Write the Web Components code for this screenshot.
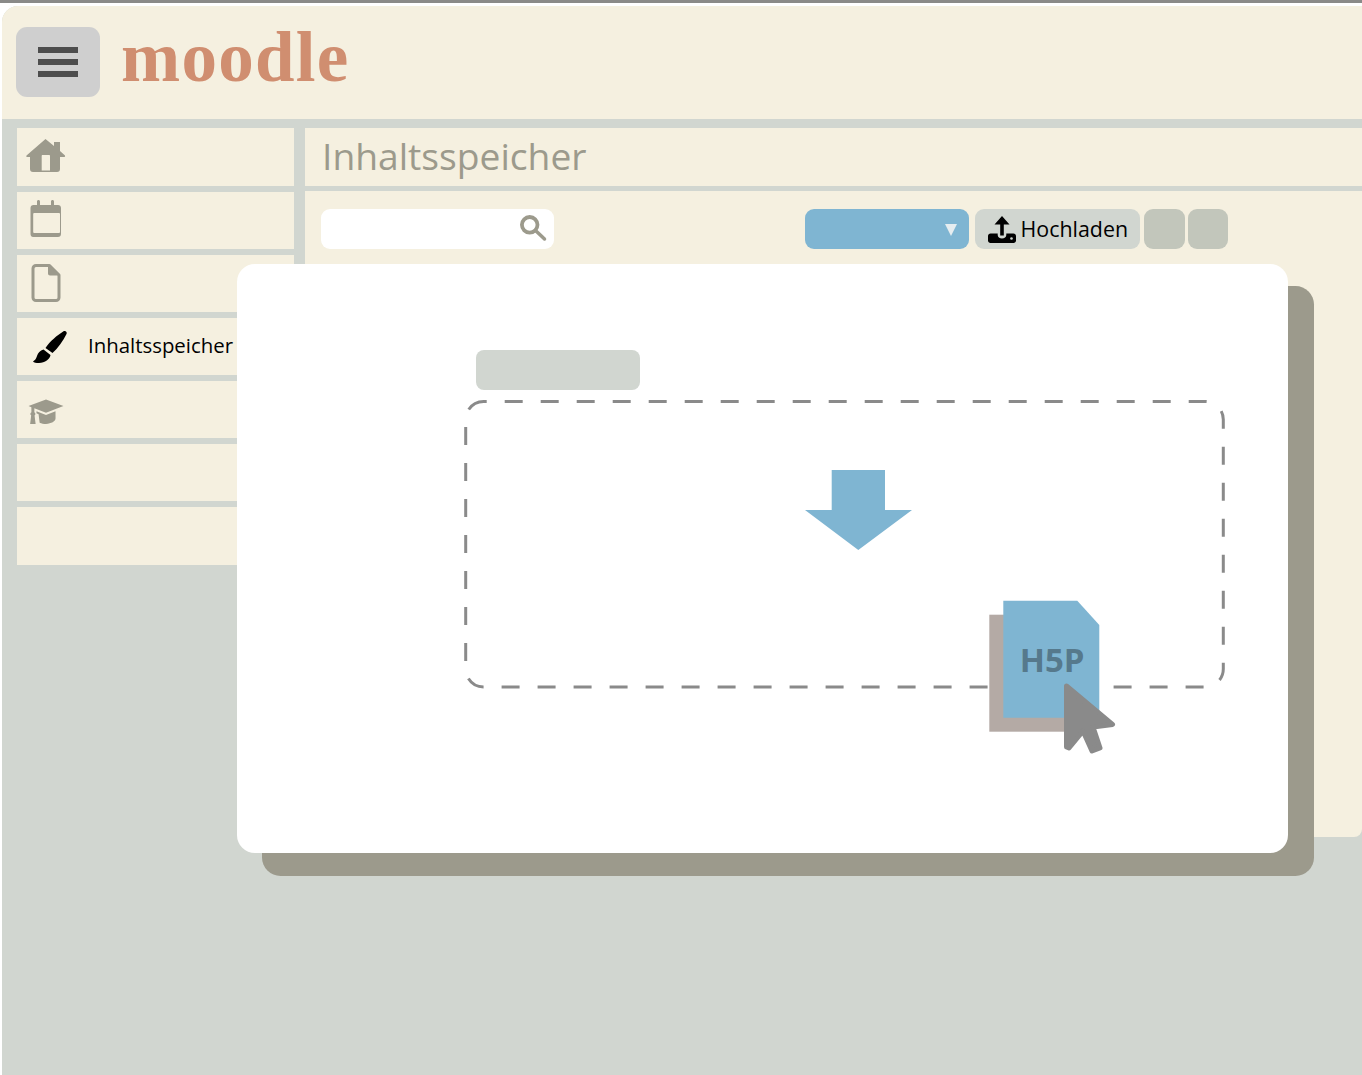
<!DOCTYPE html>
<html>
<head>
<meta charset="utf-8">
<title>Inhaltsspeicher</title>
<style>
  html, body { margin: 0; padding: 0; background: #fff; }
  body { font-family: "Open Sans", "Noto Sans", sans-serif; }
</style>
</head>
<body>
<moodle-app>
  <moodle-header slot="header"></moodle-header>
  <side-nav slot="nav">
    <nav-item icon="home"></nav-item>
    <nav-item icon="calendar"></nav-item>
    <nav-item icon="file"></nav-item>
    <nav-item icon="brush" active>Inhaltsspeicher</nav-item>
    <nav-item icon="hat"></nav-item>
    <nav-item></nav-item>
    <nav-item></nav-item>
  </side-nav>
  <content-bank slot="main"></content-bank>
  <upload-modal slot="modal"></upload-modal>
</moodle-app>

<script>
const ICONS = {
  home: `<svg width="40" height="36" viewBox="0 2 40 36"><path fill="#9c9a8c" fill-rule="evenodd" d="M19.500 2 28 9V5h6v9l5 4.500c.5 1.500-.5 1.500-1 1.500h-4v12c0 2-1 3-3 3H7c-2 0-3-1-3-3V20H1.500c-1 0-1.500-.5-1-1.500zM15.700 19v14.500H24V19c0-.6-.4-1-1-1h-6.300c-.6 0-1 .4-1 1z"/></svg>`,
  calendar: `<svg style="margin:-2px 0 0 4px" width="33" height="38" viewBox="0 0 33 38"><path fill="#9c9a8c" d="M3.500 5H7V1.500C7 .600 7.600 0 8.500 0s1.500.600 1.500 1.500V5h11V1.500c0-.900.600-1.500 1.500-1.500s1.500.600 1.500 1.500V5h4c1.800 0 3 1.200 3 3v26c0 1.800-1.200 3-3 3h-25C1.700 37 .500 35.800.500 34V8c0-1.800 1.200-3 3-3z"/><rect x="3.200" y="13" width="26.800" height="20" rx="1" fill="#f5f0e0"/></svg>`,
  file: `<svg style="margin-left:5px" width="30" height="38" viewBox="0 0 30 38"><path fill="none" stroke="#9c9a8c" stroke-width="3" stroke-linejoin="round" d="M5 1.500h13.500L28 11v22.500c0 1.700-1.300 3-3 3H5c-1.700 0-3-1.300-3-3v-29c0-1.700 1.300-3 3-3z"/><path fill="#9c9a8c" d="M17 1.500 28 11.500H19c-1.100 0-2-.9-2-2z"/></svg>`,
  brush: `<svg style="margin-top:1px" width="38" height="34" viewBox="0 0 38 34"><path fill="#000" d="M31.500 1.200c2-1 4 .800 3 2.800C31 11 26 18 20.500 23l-7-5C18 11 25 5.500 31.500 1.200zM11.500 19.500l7 5.500c-.5 4-5.500 8-11.500 8-3 0-5-.5-6-1.500C3.500 30 4 28.500 5 26c1-3 3-5.500 6.500-6.500z"/></svg>`,
  hat: `<svg style="margin:5px 0 0 1.500px" width="36" height="26.500" viewBox="0.500 0.500 34 25"><path fill="#9c9a8c" d="M17.500 1 34 7.200 17.500 13.500 6.500 9.300V13c.6.300 1 .9 1 1.600 0 .6-.3 1.100-.8 1.400l1 8H2.500l1-8c-.5-.3-.8-.8-.8-1.400 0-.7.400-1.300 1-1.600V8.300L1 7.200zM8.500 12l9 3.500 9-3.500v7c0 2.500-4 5-9 5-2.200 0-4.300-.5-6-1.200L10.500 15 8.500 14z"/></svg>`
};

class MoodleApp extends HTMLElement {
  constructor() {
    super();
    this.attachShadow({ mode: "open" }).innerHTML = `
      <style>
        :host { display: block; position: relative; width: 1362px; height: 1075px; overflow: hidden; background: #fff; }
        .topline { height: 3px; background: #8a8a88; }
        .frame {
          margin: 3px 0 0 2px;
          height: 1069px;
          background: #d1d6d0;
          border-top-left-radius: 16px;
          overflow: hidden;
          display: flex;
          flex-direction: column;
        }
        .body {
          display: grid;
          grid-template-columns: 277px 1fr;
          column-gap: 11px;
          padding: 9px 0 0 15px;
          align-items: start;
        }
      </style>
      <div class="topline"></div>
      <div class="frame">
        <slot name="header"></slot>
        <div class="body">
          <slot name="nav"></slot>
          <slot name="main"></slot>
        </div>
      </div>
      <slot name="modal"></slot>
    `;
  }
}

class MoodleHeader extends HTMLElement {
  constructor() {
    super();
    this.attachShadow({ mode: "open" }).innerHTML = `
      <style>
        :host { display: flex; align-items: center; gap: 21px; height: 113px; box-sizing: border-box; padding: 0 0 2px 14px; background: #f5f0e0; }
        .burger {
          width: 84px; height: 70px; border-radius: 11px; background: #cfcfcf;
          display: flex; flex-direction: column; justify-content: center; align-items: center; gap: 6px;
        }
        .burger i { display: block; width: 40px; height: 6px; background: #4d4d4d; }
        .logo {
          font-family: "Liberation Serif", serif; font-weight: 700; font-size: 71px; line-height: 1;
          color: #d08e70; letter-spacing: 1.300px; margin-top: -8px;
        }
      </style>
      <div class="burger"><i></i><i></i><i></i></div>
      <div class="logo">moodle</div>
    `;
  }
}

class SideNav extends HTMLElement {
  constructor() {
    super();
    this.attachShadow({ mode: "open" }).innerHTML = `
      <style>
        :host { display: flex; flex-direction: column; gap: 5.750px; margin-top: .4px; }
      </style>
      <slot></slot>
    `;
  }
}

class NavItem extends HTMLElement {
  constructor() {
    super();
    const icon = ICONS[this.getAttribute("icon")] || "";
    this.attachShadow({ mode: "open" }).innerHTML = `
      <style>
        :host { display: flex; align-items: center; height: 57.400px; background: #f5f0e0; color: #000; font-size: 20.400px; white-space: nowrap; }
        .icon { width: 71px; flex: none; display: flex; align-items: center; padding-left: 9px; box-sizing: border-box; }
        :host([active]) .icon { padding-left: 15px; }
        .label { margin-top: -4px; }
        svg { display: block; }
      </style>
      <span class="icon">${icon}</span>
      <span class="label"><slot></slot></span>
    `;
  }
}

class ContentBank extends HTMLElement {
  constructor() {
    super();
    this.attachShadow({ mode: "open" }).innerHTML = `
      <style>
        :host { display: block; }
        h1 {
          margin: 0; height: 58px; background: #f5f0e0; padding-left: 17px;
          font-weight: 400; font-size: 37.200px; line-height: 56px; color: #9c9a8c;
        }
        .panel {
          margin-top: 5px; height: 646px; box-sizing: border-box; background: #f5f0e0;
          border-bottom-right-radius: 8px; padding: 18px 0 0 16px;
          display: flex; align-items: flex-start;
        }
        .search {
          width: 233px; height: 40px; border-radius: 9px; background: #fff;
          display: flex; align-items: center; justify-content: flex-end; padding-right: 7px; box-sizing: border-box;
        }
        .actions { margin-left: 251px; display: flex; }
        .select {
          position: relative; width: 164px; height: 40px; border-radius: 9px; background: #7fb5d2;
          margin-right: 6px;
        }
        .select::after {
          content: ""; position: absolute; right: 12px; top: 15px;
          border-left: 6px solid transparent; border-right: 6px solid transparent; border-top: 12px solid #e6edf0;
        }
        .upload {
          width: 165px; height: 40px; border-radius: 9px; background: #d1d6d0; margin-right: 4px;
          display: flex; align-items: center; gap: 5px; padding-left: 12.500px; box-sizing: border-box;
          font-size: 21.400px; color: #000;
        }
        .upload span { margin-top: -2px; }
        .square { width: 40.500px; height: 40px; border-radius: 9px; background: #c2c6bb; margin-right: 3.500px; }
        .square:last-child { width: 40px; margin-right: 0; }
        svg { display: block; }
      </style>
      <h1>Inhaltsspeicher</h1>
      <div class="panel">
        <div class="search">
          <svg width="28" height="28" viewBox="0 0 28 28"><circle cx="10.700" cy="9.800" r="7.800" fill="none" stroke="#9c9a8c" stroke-width="3.800"/><path d="M16.500 15.500l9 8.500" stroke="#9c9a8c" stroke-width="3.500" stroke-linecap="round"/></svg>
        </div>
        <div class="actions">
          <div class="select"></div>
          <div class="upload">
            <svg width="28" height="27" viewBox="0 0 28 27"><path fill="#000" d="M14 0l7.500 8.500h-5.700v11h-3.600v-11H6.500zM2.500 17.500h7.200v1.500c0 2 1.900 3.600 4.300 3.600s4.300-1.600 4.300-3.600v-1.500h7.200c1.400 0 2.500 1.100 2.500 2.500v4.500c0 1.400-1.100 2.500-2.500 2.500h-23C1.100 27 0 25.900 0 24.500V20c0-1.400 1.100-2.500 2.500-2.500z"/><circle cx="23.500" cy="22.500" r="1.300" fill="#d1d6d0"/></svg>
            <span>Hochladen</span>
          </div>
          <div class="square"></div>
          <div class="square"></div>
        </div>
      </div>
    `;
  }
}

class UploadModal extends HTMLElement {
  constructor() {
    super();
    this.attachShadow({ mode: "open" }).innerHTML = `
      <style>
        :host {
          position: absolute; left: 237px; top: 264px; width: 1051px; height: 589px;
          background: #fff; border-radius: 18px; box-shadow: 25.500px 22.500px 0 .5px #9c9a8c;
          box-sizing: border-box; padding: 86px 0 0 227px;
        }
        .tab { width: 164px; height: 40px; margin-left: 12px; border-radius: 8px; background: #d1d6d0; }
        drop-zone { margin-top: 10px; }
      </style>
      <div class="tab"></div>
      <drop-zone></drop-zone>
    `;
  }
}

class DropZone extends HTMLElement {
  constructor() {
    super();
    this.attachShadow({ mode: "open" }).innerHTML = `
      <style>
        :host { display: block; position: relative; width: 762px; height: 290px; }
        svg { display: block; }
        .frame, .arrow, .file { position: absolute; }
        .frame { left: 0; top: 0; }
        .arrow { left: 341px; top: 70px; }
        .file { left: 525px; top: 200px; width: 128px; height: 154px; }
        .file svg { position: absolute; left: 0; top: 0; }
        .label {
          position: absolute; left: 30.700px; top: 43px; font-family: "Open Sans", sans-serif; font-weight: 700;
          font-size: 33px; line-height: 1; color: #56798c;
        }
      </style>
      <svg class="frame" width="762" height="290" viewBox="0 0 762 290">
        <rect x="1.700" y="1.500" width="757.600" height="285.500" rx="18" fill="none" stroke="#8a8a8a" stroke-width="3" stroke-dasharray="18 18" stroke-dashoffset="-21"/>
      </svg>
      <svg class="arrow" width="107" height="80" viewBox="0 0 107 80">
        <path fill="#7fb5d2" d="M26.700 0H80v40h27L53.300 80 0 40h26.700z"/>
      </svg>
      <div class="file">
        <svg width="128" height="154" viewBox="0 0 128 154">
          <rect x=".3" y="14.700" width="80" height="117" fill="#b4aaa5"/>
          <path fill="#7fb5d2" d="M14.300 .7h74l22 24.300v92.700h-96z"/>
        </svg>
        <span class="label">H5P</span>
        <svg width="128" height="154" viewBox="0 0 128 154">
          <path fill="#8a8a8a" stroke="#8a8a8a" stroke-width="5" stroke-linejoin="round" d="M77.500 86 123.500 124.500 104 127 111 148 103 151 94 131 80 148 77.500 147z"/>
        </svg>
      </div>
    `;
  }
}

customElements.define("moodle-app", MoodleApp);
customElements.define("moodle-header", MoodleHeader);
customElements.define("side-nav", SideNav);
customElements.define("nav-item", NavItem);
customElements.define("content-bank", ContentBank);
customElements.define("upload-modal", UploadModal);
customElements.define("drop-zone", DropZone);
</script>
</body>
</html>
